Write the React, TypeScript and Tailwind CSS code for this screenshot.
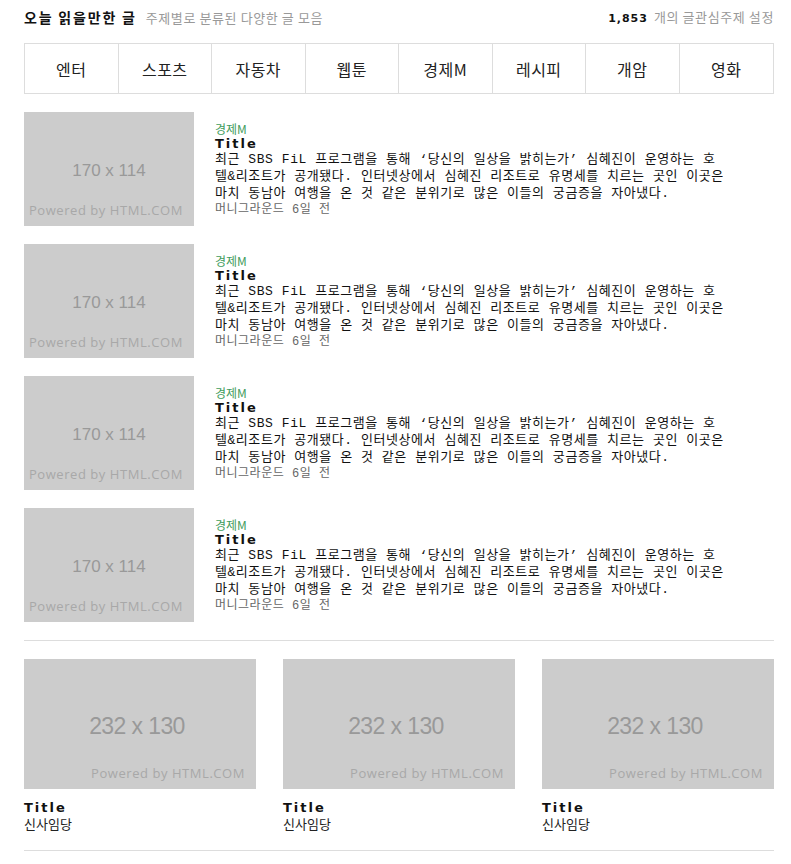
import React from "react";

const KR = { fontFamily: '"Noto Sans CJK KR", "Noto Sans", sans-serif' };
const MONO = { fontFamily: '"Liberation Mono", "Noto Sans CJK KR", monospace' };
const tabs = ["엔터", "스포츠", "자동차", "웹툰", "경제M", "레시피", "개암", "영화"];

function ListItem() {
  return (
    <div className="flex gap-[21px]">
      <div className="relative w-[170px] h-[114px] shrink-0 bg-[#cccccc]">
        <div className="absolute inset-0 pt-[4px] flex items-center justify-center text-[17px] text-[#999999]" style={{ fontFamily: '"Liberation Sans", Arial, sans-serif' }}>170 x 114</div>
        <div className="absolute left-[5px] bottom-[6px] text-[13px] text-[#a8a8a8] tracking-[0.55px]" style={{ fontFamily: '"Open Sans", sans-serif' }}>Powered by HTML.COM</div>
      </div>
      <div className="pt-[10px] text-[13px] leading-[17px] text-[#111]">
        <div className="text-[12px] leading-[14px] text-[#3f9c5c]">경제M</div>
        <div className="font-bold tracking-[2px] leading-[15px] text-[#111]" style={{ fontFamily: '"DejaVu Sans", sans-serif' }}>Title</div>
        <div style={MONO}>
          <div className="whitespace-nowrap tracking-[0.55px]">최근 SBS FiL 프로그램을 통해 ‘당신의 일상을 밝히는가’ 심혜진이 운영하는 호</div>
          <div className="whitespace-nowrap tracking-[0.55px]">텔&amp;리조트가 공개됐다. 인터넷상에서 심혜진 리조트로 유명세를 치르는 곳인 이곳은</div>
          <div className="whitespace-nowrap tracking-[0.55px]">마치 동남아 여행을 온 것 같은 분위기로 많은 이들의 궁금증을 자아냈다.</div>
          <div className="text-[12px] text-[#666] tracking-[0.5px]">머니그라운드 6일 전</div>
        </div>
      </div>
    </div>
  );
}

function GridItem() {
  return (
    <div className="flex flex-col">
      <div className="relative h-[130px] bg-[#cccccc]">
        <div className="absolute inset-0 pr-[6px] pt-[4px] flex items-center justify-center text-[23px] tracking-[-0.6px] text-[#999999]" style={{ fontFamily: '"Liberation Sans", Arial, sans-serif' }}>232 x 130</div>
        <div className="absolute right-[11px] bottom-[6px] text-[13px] text-[#a8a8a8] tracking-[0.55px]" style={{ fontFamily: '"Open Sans", sans-serif' }}>Powered by HTML.COM</div>
      </div>
      <div className="mt-[11px] font-bold text-[13px] tracking-[2px] leading-[15px] text-[#111]" style={{ fontFamily: '"DejaVu Sans", sans-serif' }}>Title</div>
      <div className="text-[13px] leading-[17px] text-[#222]">신사임당</div>
    </div>
  );
}

export default function App() {
  return (
    <div className="bg-white min-h-[864px] w-[791px]" style={KR}>
      <div className="mx-[24px] w-[750px] pt-[8px]">
        <div className="flex items-center justify-between h-[18px]">
          <div className="flex items-baseline gap-[9px]">
            <span className="text-[14px] font-bold text-[#111] tracking-[1.8px]">오늘 읽을만한 글</span>
            <span className="text-[13px] text-[#999] tracking-[0.6px]">주제별로 분류된 다양한 글 모음</span>
          </div>
          <div className="flex items-baseline gap-[6px] text-[13px]">
            <span className="font-bold text-[#111] text-[11px] tracking-[1px]" style={{ fontFamily: '"DejaVu Sans", sans-serif' }}>1,853</span>
            <span className="text-[#999] tracking-[0.6px]">개의 글관심주제 설정</span>
          </div>
        </div>
        <div className="mt-[17px] grid grid-cols-8 border border-[#dddddd] h-[51px]">
          {tabs.map((t, i) => (
            <div key={t} className={`flex items-center justify-center text-[16px] text-[#222] tracking-[0.5px] ${i < 7 ? "border-r border-[#dddddd]" : ""}`}>{t}</div>
          ))}
        </div>
        <div className="mt-[18px] flex flex-col gap-[18px]">
          <ListItem />
          <ListItem />
          <ListItem />
          <ListItem />
        </div>
        <div className="mt-[18px] h-px bg-[#dddddd]" />
        <div className="mt-[18px] grid grid-cols-3 gap-[27px]">
          <GridItem />
          <GridItem />
          <GridItem />
        </div>
        <div className="mt-[18px] h-px bg-[#dddddd]" />
      </div>
    </div>
  );
}
